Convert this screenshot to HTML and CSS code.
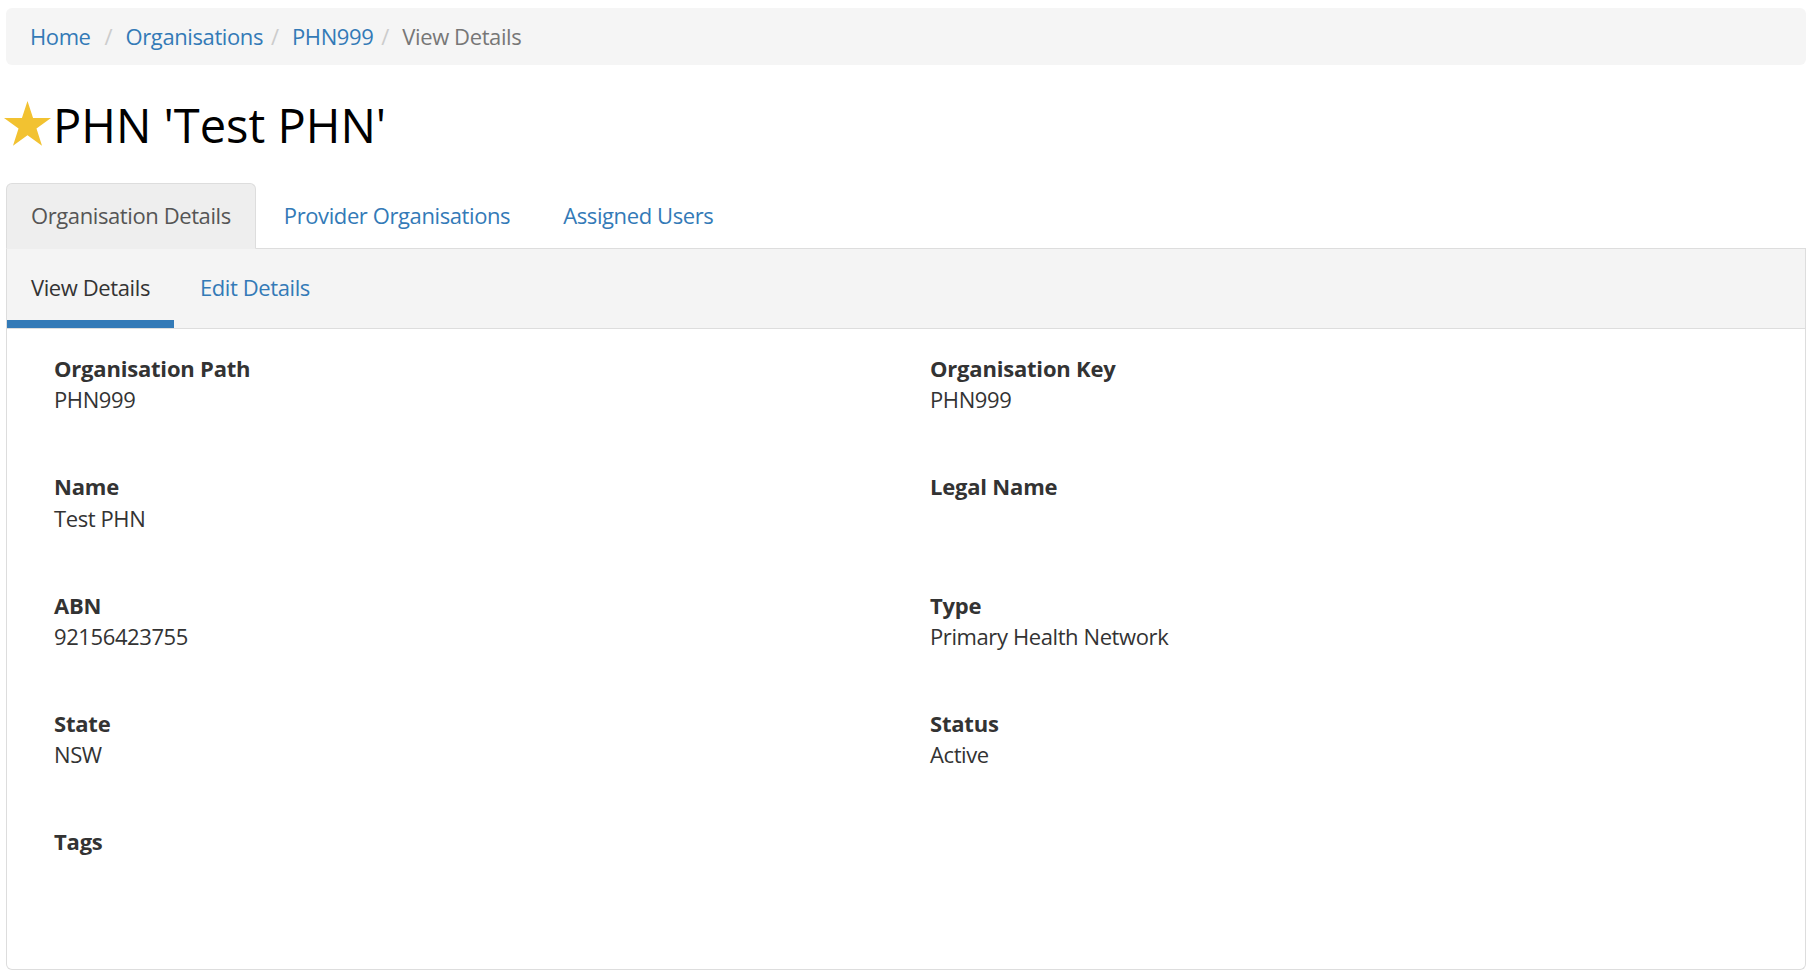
FILE: index.html
```html
<!DOCTYPE html>
<html lang="en">
<head>
<meta charset="utf-8">
<title>PHN 'Test PHN'</title>
<link rel="stylesheet" href="styles.css">
</head>
<body>
<div class="page">
  <ol class="breadcrumb">
    <li class="crumb crumb-first"><a href="#">Home</a></li>
    <li class="crumb"><a href="#">Organisations</a></li>
    <li class="crumb"><a href="#">PHN999</a></li>
    <li class="crumb active">View Details</li>
  </ol>

  <h1 class="title">
    <svg class="star" width="47" height="45" viewBox="0 0 47 45" aria-hidden="true">
      <polygon fill="#f2c231" points="23.5,0 29.05,17.06 47,17.07 32.48,27.62 38.02,44.68 23.5,34.14 8.98,44.68 14.52,27.62 0,17.07 17.95,17.06"/>
    </svg><span>PHN 'Test PHN'</span>
  </h1>

  <ul class="tabs">
    <li class="tab active"><a href="#">Organisation Details</a></li>
    <li class="tab"><a href="#">Provider Organisations</a></li>
    <li class="tab"><a href="#">Assigned Users</a></li>
  </ul>

  <div class="panel">
    <ul class="subtabs">
      <li class="subtab active"><a href="#">View Details</a></li>
      <li class="subtab"><a href="#">Edit Details</a></li>
    </ul>
    <div class="panel-body">
      <div class="field"><div class="label">Organisation Path</div><div class="value">PHN999</div></div>
      <div class="field"><div class="label">Organisation Key</div><div class="value">PHN999</div></div>
      <div class="field"><div class="label">Name</div><div class="value">Test PHN</div></div>
      <div class="field"><div class="label">Legal Name</div><div class="value"></div></div>
      <div class="field"><div class="label">ABN</div><div class="value">92156423755</div></div>
      <div class="field"><div class="label">Type</div><div class="value">Primary Health Network</div></div>
      <div class="field"><div class="label">State</div><div class="value">NSW</div></div>
      <div class="field"><div class="label">Status</div><div class="value">Active</div></div>
      <div class="field"><div class="label">Tags</div><div class="value"></div></div>
    </div>
  </div>
</div>
</body>
</html>
```

FILE: styles.css
```css
* { box-sizing: border-box; }

html, body {
  margin: 0;
  padding: 0;
  background: #fff;
}

body {
  font-family: "Open Sans", "Liberation Sans", sans-serif;
  font-size: 22px;
  line-height: 1.42857;
  color: #333;
  letter-spacing: -0.4px;
}

a {
  color: #337ab7;
  text-decoration: none;
}

.page {
  padding: 8px 10px 0 6px;
}

/* Breadcrumb */
.breadcrumb {
  list-style: none;
  margin: 0;
  padding: 13px 24px;
  background: #f5f5f5;
  border-radius: 6px;
  display: flex;
}

.crumb + .crumb::before {
  content: "/\00a0";
  padding: 0 8px;
  color: #ccc;
}

.crumb-first {
  margin-right: 6px;
}

.crumb.active {
  color: #777;
}

/* Title */
.title {
  margin: 35px 0 31px;
  font-size: 47px;
  font-weight: 400;
  line-height: 1.1;
  color: #000;
  letter-spacing: 0;
  display: flex;
  align-items: flex-end;
}

.star {
  display: block;
  margin-left: -2px;
  margin-right: 2px;
  margin-bottom: 6px;
  flex: none;
}

/* Tabs */
.tabs {
  list-style: none;
  margin: 0;
  padding: 0;
  display: flex;
  border-bottom: 1px solid #ddd;
}

.tab {
  margin-right: 3px;
  margin-bottom: -1px;
}

.tab a {
  display: block;
  padding: 16px 24px;
  border: 1px solid transparent;
  border-radius: 6px 6px 0 0;
}

.tab.active a {
  color: #555;
  background: #eee;
  border-color: #ddd #ddd transparent;
}

/* Panel */
.panel {
  border: 1px solid #ddd;
  border-top: 0;
  border-radius: 0 0 6px 6px;
}

.subtabs {
  list-style: none;
  margin: 0;
  padding: 0;
  display: flex;
  background: #f4f4f4;
  border-bottom: 1px solid #ddd;
}

.subtab {
  margin-right: 2px;
}

.subtab a {
  display: block;
  padding: 23px 24px 17px;
  border-bottom: 8px solid transparent;
}

.subtab.active a {
  color: #333;
  border-bottom-color: #337ab7;
}

.panel-body {
  padding: 24px 23px;
  display: grid;
  grid-template-columns: 1fr 1fr;
}

.field {
  padding: 0 24px;
  margin-bottom: 55.5px;
}

.label {
  font-weight: 700;
  color: #333;
  letter-spacing: -0.2px;
  height: 31.43px;
}

.value {
  height: 31.43px;
  color: #333;
}
```
